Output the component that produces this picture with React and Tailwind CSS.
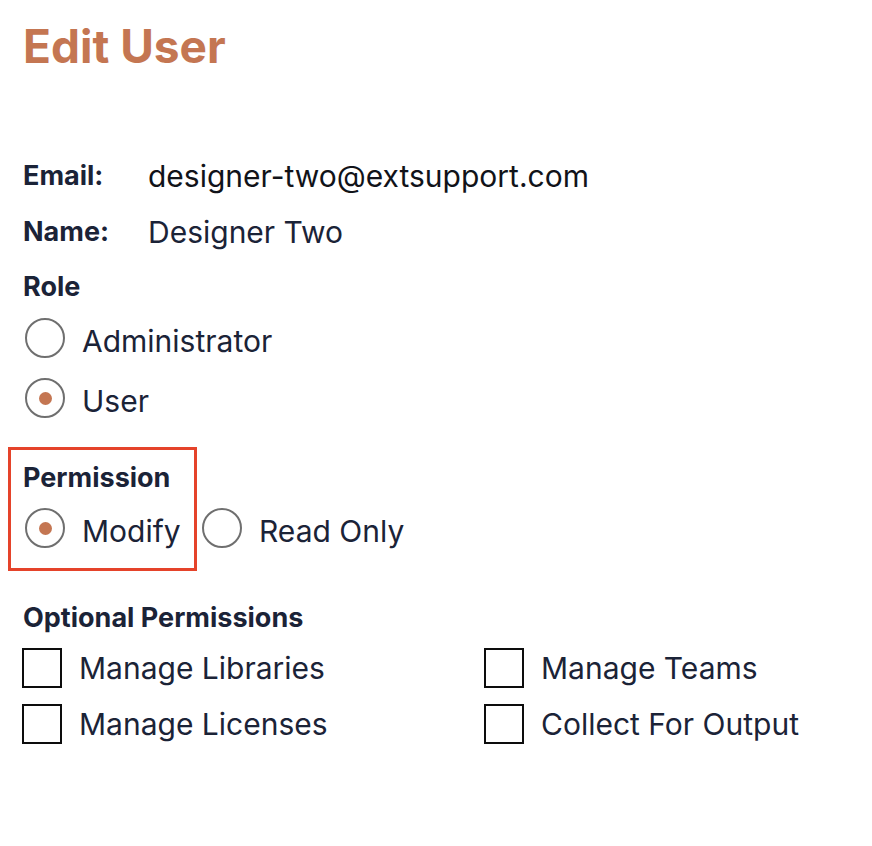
import React from 'react';

const font = { fontFamily: 'Inter, "Noto Sans", sans-serif' };

function Radio({ checked }) {
  return (
    <span className="flex h-[40px] w-[40px] shrink-0 items-center justify-center rounded-full border-2 border-[#6f6f6f] bg-white">
      {checked && <span className="h-[13px] w-[13px] rounded-full bg-[#c47652]" />}
    </span>
  );
}

function RadioRow({ label, checked, className = '' }) {
  return (
    <label className={`flex h-[48px] items-center ${className}`}>
      <span className="ml-[2px]">
        <Radio checked={checked} />
      </span>
      <span className="ml-[17px] pt-[7px] text-[30px] text-[#1b2337]">{label}</span>
    </label>
  );
}

function Check({ label }) {
  return (
    <label className="flex h-[56px] items-center">
      <span className="-ml-px h-[40px] w-[40px] shrink-0 border-[2.5px] border-[#0d0d0d] bg-white" />
      <span className="ml-[17px] text-[30px] text-[#1b2337]">{label}</span>
    </label>
  );
}

export default function App() {
  return (
    <div style={font} className="min-h-[846px] w-[872px] bg-white pl-[23px]">
      <div className="flex h-[93px] items-center">
        <h1 className="text-[46px] font-bold text-[#c47652]">Edit User</h1>
      </div>

      <div className="mt-[55px]">
        <div className="flex h-[56px] items-center">
          <span className="w-[125px] text-[27px] font-bold text-[#1b2337]">Email:</span>
          <span className="text-[30px] text-[#111319]">designer-two@extsupport.com</span>
        </div>
        <div className="flex h-[56px] items-center">
          <span className="w-[125px] text-[27px] font-bold text-[#1b2337]">Name:</span>
          <span className="text-[30px] text-[#1b2337]">Designer Two</span>
        </div>
      </div>

      <div className="flex h-[54px] items-center text-[27px] font-bold text-[#1b2337]">Role</div>
      <RadioRow label="Administrator" />
      <RadioRow label="User" checked className="mt-[12px]" />

      <div className="mt-[25px] flex items-end">
        <div className="-ml-[15px] w-[189px] border-[3px] border-[#e5432a] pb-[18px] pl-[12px]">
          <div className="flex h-[56px] items-center text-[27px] font-bold text-[#1b2337]">Permission</div>
          <RadioRow label="Modify" checked className="!h-[44px]" />
        </div>
        <RadioRow label="Read Only" className="mb-[21px] ml-[3px] !h-[44px]" />
      </div>

      <div className="mt-[25px] flex h-[44px] items-center text-[27px] font-bold text-[#1b2337]">
        Optional Permissions
      </div>
      <div className="grid grid-cols-[462px_1fr]">
        <Check label="Manage Libraries" />
        <Check label="Manage Teams" />
        <Check label="Manage Licenses" />
        <Check label="Collect For Output" />
      </div>
    </div>
  );
}
